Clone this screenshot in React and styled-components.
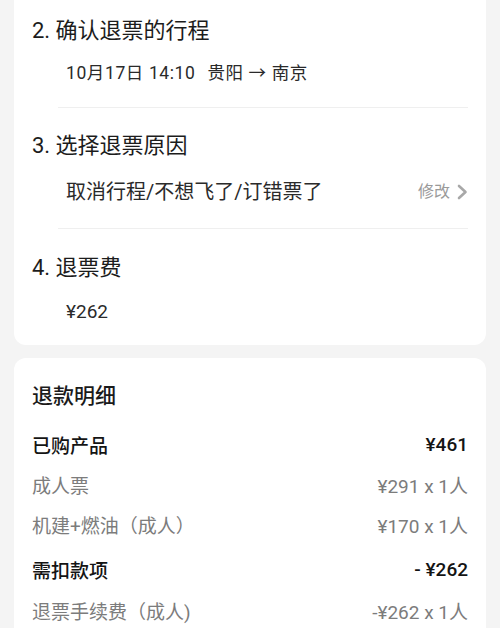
import React from "react";
import styled, { createGlobalStyle } from "styled-components";

const Global = createGlobalStyle`
  html, body { margin: 0; padding: 0; background: #f4f4f4; }
  body { font-family: Roboto, "Noto Sans CJK SC", sans-serif; -webkit-font-smoothing: antialiased; }
`;

const Page = styled.div`
  display: flex;
  flex-direction: column;
  gap: 13px;
  padding: 0 14px 20px;
`;

const Card = styled.div`
  background: #fff;
  border-radius: 12px;
  margin-top: ${(p) => (p.$clipTop ? "-20px" : "0")};
  padding: ${(p) => (p.$clipTop ? "36px 18px 19px" : "23px 18px 20px")};
  display: flex;
  flex-direction: column;
`;

const StepTitle = styled.div`
  font-size: 22px;
  line-height: 30px;
  color: #1c1c1c;
  margin-top: ${(p) => p.$mt || 0}px;
`;

const Detail = styled.div`
  display: flex;
  align-items: center;
  justify-content: space-between;
  padding-left: 34px;
  font-size: ${(p) => p.$size || 18}px;
  letter-spacing: ${(p) => p.$ls || 0}px;
  line-height: 28px;
  color: #2a2a2a;
  margin-top: ${(p) => p.$mt || 0}px;
`;

const Divider = styled.div`
  height: 1px;
  background: #efefef;
  margin: ${(p) => p.$mt}px 0 0 26px;
`;

const Edit = styled.span`
  display: flex;
  align-items: center;
  gap: 6px;
  font-size: 16px;
  letter-spacing: 0;
  color: #9a9a9a;
`;

const Spacer = styled.span`
  display: inline-block;
  width: ${(p) => p.$w}px;
`;

const CardTitle = styled.div`
  font-size: 21px;
  line-height: 30px;
  font-weight: 500;
  color: #1a1a1a;
  margin-bottom: 13px;
`;

const Row = styled.div`
  display: flex;
  justify-content: space-between;
  align-items: center;
  height: 40px;
  font-size: 19px;
  color: ${(p) => (p.$head ? "#141414" : "#7c7c7c")};
  font-weight: ${(p) => (p.$head ? 500 : 400)};
  margin-top: ${(p) => p.$gap || 0}px;
`;

const Chevron = () => (
  <svg width="12" height="16" viewBox="0 0 12 16">
    <path d="M3 2 L9.5 8 L3 14" fill="none" stroke="#a8a8a8" strokeWidth="2.6" strokeLinecap="round" strokeLinejoin="round" />
  </svg>
);

export default function App() {
  return (
    <>
      <Global />
      <Page>
        <Card $clipTop>
          <StepTitle>2. 确认退票的行程</StepTitle>
          <Detail $mt={13} $size={17.5} $ls={0.6}>
            <span>
              10月17日 14:10<Spacer $w={12} />贵阳 → 南京
            </span>
          </Detail>
          <Divider $mt={20} />
          <StepTitle $mt={23}>3. 选择退票原因</StepTitle>
          <Detail $mt={17} $size={20}>
            <span>取消行程/不想飞了/订错票了</span>
            <Edit>
              修改
              <Chevron />
            </Edit>
          </Detail>
          <Divider $mt={22} />
          <StepTitle $mt={24}>4. 退票费</StepTitle>
          <Detail $mt={15} $size={19}>
            <span>¥262</span>
          </Detail>
        </Card>
        <Card>
          <CardTitle>退款明细</CardTitle>
          <Row $head>
            <span>已购产品</span>
            <span>¥461</span>
          </Row>
          <Row>
            <span>成人票</span>
            <span>¥291 x 1人</span>
          </Row>
          <Row>
            <span>机建+燃油（成人）</span>
            <span>¥170 x 1人</span>
          </Row>
          <Row $head $gap={5}>
            <span>需扣款项</span>
            <span>- ¥262</span>
          </Row>
          <Row $gap={1}>
            <span>退票手续费（成人)</span>
            <span>-¥262 x 1人</span>
          </Row>
        </Card>
      </Page>
    </>
  );
}
